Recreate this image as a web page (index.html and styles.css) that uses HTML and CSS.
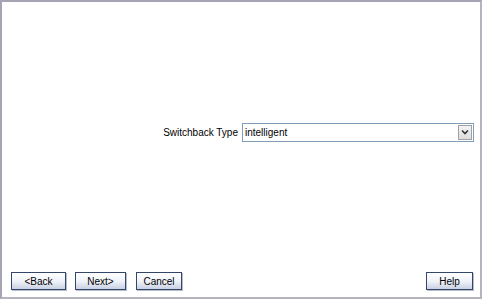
FILE: index.html
```html
<!DOCTYPE html>
<html lang="en">
<head>
    <meta charset="UTF-8">
    <title>Switchback</title>
    <link rel="stylesheet" href="styles.css">
</head>
<body>
    <div class="frame">
        <div class="content">
            <label class="label">Switchback Type</label>
            <div class="select">
                <span class="value">intelligent</span>
                <span class="arrow">
                    <svg width="8" height="6" viewBox="0 0 8 6"><path d="M1 1.5 L4 4.5 L7 1.5" fill="none" stroke="#333" stroke-width="1.6"/></svg>
                </span>
            </div>
        </div>
        <div class="actions">
            <button class="btn back">&lt;Back</button>
            <button class="btn next">Next&gt;</button>
            <button class="btn cancel">Cancel</button>
            <div class="spacer"></div>
            <button class="btn help">Help</button>
        </div>
    </div>
</body>
</html>
```
FILE: styles.css
```css
body{
    margin: 0;
    background: #fff;
    font-family: "Liberation Sans", Arial, sans-serif;
    font-size: 10px;
}
.frame{
    width: 482px;
    height: 299px;
    box-sizing: border-box;
    border: 2px solid #a4a4b4;
    border-right-color: #b4b4c0;
    border-bottom-color: #b4b4c0;
    background: #fff;
    display: flex;
    flex-direction: column;
}
.content{
    flex: 1;
    display: flex;
    align-items: center;
    justify-content: flex-end;
    padding-right: 6px;
}
.label{
    margin-right: 4px;
    color: #000;
}
.select{
    width: 232px;
    height: 19px;
    box-sizing: border-box;
    border: 1px solid #7f9db9;
    display: flex;
    align-items: center;
    justify-content: space-between;
}
.value{
    padding-left: 2px;
}
.arrow{
    width: 14px;
    height: 15px;
    margin-right: 1px;
    box-sizing: border-box;
    border: 1px solid #a0a0a8;
    background: linear-gradient(#f4f4f4, #dcdcdc);
    display: flex;
    align-items: center;
    justify-content: center;
}
.actions{
    display: flex;
    padding: 10px 7px 7px 9px;
}
.spacer{
    flex: 1;
}
.btn{
    height: 18px;
    box-sizing: border-box;
    padding: 0;
    font-family: "Liberation Sans", Arial, sans-serif;
    font-size: 10px;
    color: #000;
    border: 1px solid #34466a;
    background: linear-gradient(#ffffff, #eef1f8 55%, #c8d0e2);
    box-shadow: 1px 1px 0 #b8bcc8;
}
.back{
    width: 55px;
}
.next{
    width: 51px;
    margin-left: 9px;
}
.cancel{
    width: 46px;
    margin-left: 10px;
}
.help{
    width: 47px;
}
```
